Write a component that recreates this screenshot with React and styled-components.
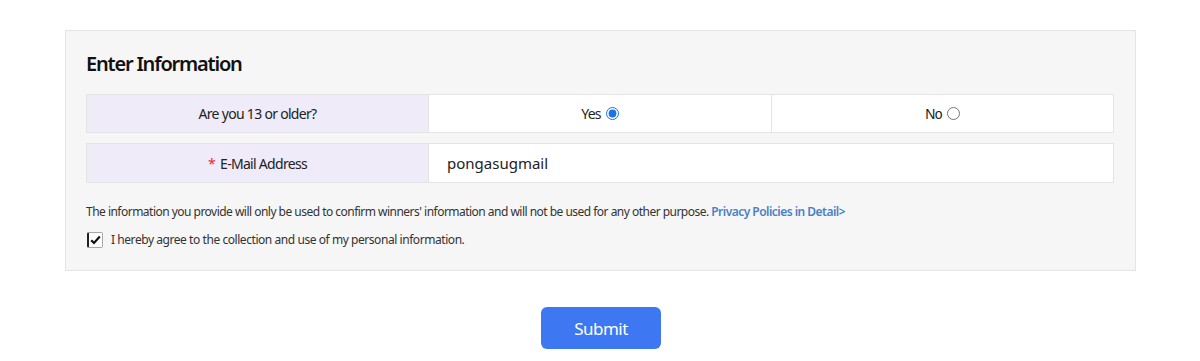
import React, { useState } from "react";
import styled, { createGlobalStyle } from "styled-components";

const GlobalStyle = createGlobalStyle`
  html, body {
    margin: 0;
    padding: 0;
    background: #ffffff;
    font-family: "Noto Sans", "Open Sans", sans-serif;
    color: #222;
  }
`;

const Page = styled.div`
  width: 1200px;
  padding: 30px 64px 0 65px;
  box-sizing: border-box;
`;

const Panel = styled.section`
  background: #f6f6f6;
  border: 1px solid #e4e4e4;
  padding: 19px 21px 22px 20px;
`;

const Title = styled.h2`
  margin: 0 0 16px;
  font-size: 20px;
  font-weight: 600;
  letter-spacing: -1.2px;
  line-height: 28px;
  color: #111;
`;

const Row = styled.div`
  display: grid;
  grid-template-columns: ${(p) => p.$cols};
  height: ${(p) => p.$h || 39}px;
  margin-bottom: 10px;
  border: 1px solid #e4e4e4;
  box-sizing: border-box;
  background: #fff;
`;

const Label = styled.div`
  background: #efebf9;
  display: flex;
  align-items: center;
  justify-content: center;
  font-size: 14px;
  letter-spacing: -0.7px;
  color: #222;
  border-right: 1px solid #e4e4e4;
`;

const Star = styled.span`
  color: #e8283c;
  margin-right: 5px;
`;

const Choice = styled.label`
  display: flex;
  align-items: center;
  justify-content: center;
  gap: 3px;
  font-size: 14px;
  letter-spacing: -0.7px;
  color: #222;
  font-family: ${(p) => (p.$plain ? '"Liberation Sans", Arial, sans-serif' : "inherit")};
  border-left: ${(p) => (p.$divided ? "1px solid #e4e4e4" : "none")};
  cursor: pointer;

  input {
    margin: 0 0 0 2px;
    width: 13px;
    height: 13px;
    accent-color: #1a73e8;
  }
`;

const EmailInput = styled.input`
  border: none;
  outline: none;
  background: #fff;
  padding: 0 18px;
  font-family: "Noto Sans", sans-serif;
  font-size: 15px;
  color: #222;
`;

const Notice = styled.p`
  margin: 20px 0 0;
  font-size: 12px;
  letter-spacing: -0.52px;
  color: #333;
  line-height: 18px;
`;

const PolicyLink = styled.a`
  color: #4a80c6;
  font-weight: 600;
  text-decoration: none;
  cursor: pointer;
`;

const Agree = styled.label`
  display: flex;
  align-items: center;
  gap: 8px;
  margin-top: 10px;
  font-size: 12px;
  letter-spacing: -0.44px;
  color: #333;
  cursor: pointer;
`;

const Box = styled.span`
  width: 16px;
  height: 16px;
  border: 1px solid #a8a8a8;
  border-left: 2px solid #222;
  border-radius: 2px;
  background: #fff;
  display: flex;
  align-items: center;
  justify-content: center;
  box-sizing: border-box;
  margin-left: 1px;
`;

const Footer = styled.div`
  display: flex;
  justify-content: center;
  padding-top: 36px;
`;

const SubmitButton = styled.button`
  width: 120px;
  height: 42px;
  border: none;
  border-radius: 6px;
  background: #3d78f2;
  color: #fff;
  font-family: "Noto Sans", sans-serif;
  font-size: 17px;
  letter-spacing: -0.5px;
  cursor: pointer;
  margin-left: 1px;
`;

export default function App() {
  const [age, setAge] = useState("yes");
  const [agree, setAgree] = useState(true);

  return (
    <Page>
      <GlobalStyle />
      <Panel>
        <Title>Enter Information</Title>
        <Row $cols="342px 342px 1fr">
          <Label>Are you 13 or older?</Label>
          <Choice>
            Yes
            <input type="radio" name="age" checked={age === "yes"} onChange={() => setAge("yes")} />
          </Choice>
          <Choice $plain $divided>
            No
            <input type="radio" name="age" checked={age === "no"} onChange={() => setAge("no")} />
          </Choice>
        </Row>
        <Row $cols="342px 1fr" $h={40}>
          <Label>
            <Star>*</Star>E-Mail Address
          </Label>
          <EmailInput defaultValue="pongasugmail" />
        </Row>
        <Notice>
          The information you provide will only be used to confirm winners' information and will not be used for any
          other purpose. <PolicyLink>Privacy Policies in Detail&gt;</PolicyLink>
        </Notice>
        <Agree onClick={() => setAgree(!agree)}>
          <Box>
            {agree && (
              <svg width="11" height="10" viewBox="0 0 11 10">
                <path d="M1.2 5.2 L4 8 L9.8 1.6" fill="none" stroke="#111" strokeWidth="2.2" />
              </svg>
            )}
          </Box>
          I hereby agree to the collection and use of my personal information.
        </Agree>
      </Panel>
      <Footer>
        <SubmitButton>Submit</SubmitButton>
      </Footer>
    </Page>
  );
}
